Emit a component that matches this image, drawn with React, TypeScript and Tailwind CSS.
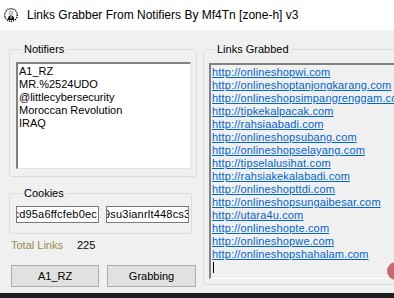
import type { ReactNode } from 'react'

const notifiers = ['A1_RZ', 'MR.%2524UDO', '@littlecybersecurity', 'Moroccan Revolution', 'IRAQ']

const links = [
  'onlineshopwi.com',
  'onlineshoptanjongkarang.com',
  'onlineshopsimpangrenggam.com',
  'tipkekalpacak.com',
  'rahsiaabadi.com',
  'onlineshopsubang.com',
  'onlineshopselayang.com',
  'tipselalusihat.com',
  'rahsiakekalabadi.com',
  'onlineshopttdi.com',
  'onlineshopsungaibesar.com',
  'utara4u.com',
  'onlineshopte.com',
  'onlineshopwe.com',
  'onlineshopshahalam.com',
]

function GroupBox({ title, className, children }: { title: string; className?: string; children: ReactNode }) {
  return (
    <fieldset className={`rounded-[3px] border border-[#dcdcdc] ${className ?? ''}`}>
      <legend className="ml-[6px] px-[2px] leading-[13px] text-black">{title}</legend>
      {children}
    </fieldset>
  )
}

function AppIcon() {
  return (
    <svg width="14" height="14" viewBox="0 0 14 14">
      <circle cx="7" cy="7" r="6.3" fill="none" stroke="#111" strokeWidth="1.4" strokeDasharray="1.2 0.9" />
      <circle cx="7" cy="7" r="4.6" fill="#fff" />
      <ellipse cx="7" cy="5" rx="1.8" ry="2" fill="#e8e0d8" stroke="#555" strokeWidth="0.5" />
      <path d="M3.6 12 Q4 7.6 7 7.6 Q10 7.6 10.4 12 Z" fill="#111" />
      <rect x="6.5" y="8" width="1" height="2.6" fill="#fff" />
    </svg>
  )
}

const btnCls = 'flex h-[22px] items-center justify-center border border-[#adadad] bg-[#e1e1e1] text-black'
const inputCls = 'flex h-[17px] w-[83px] items-center overflow-hidden whitespace-nowrap border border-[#7a7a7a] bg-white tracking-[0.2px]'

export default function App() {
  return (
    <div
      className="relative flex h-[298px] w-[394px] flex-col overflow-hidden bg-[#f0f0f0] text-[11px] text-black"
      style={{ fontFamily: '"Liberation Sans", Arial, sans-serif' }}
    >
      <div className="flex h-[30px] items-center gap-[9px] bg-white pl-[4px] text-[12px]">
        <AppIcon />
        <span>Links Grabber From Notifiers By Mf4Tn [zone-h] v3</span>
      </div>

      <div className="flex flex-1 gap-[6px] pl-[9px] pt-[13px]">
        <div className="flex w-[188px] shrink-0 flex-col">
          <GroupBox title="Notifiers" className="pb-[7px] pl-[6px] pr-[5px]">
            <div className="mt-[6px] h-[107px] border-b border-l-2 border-r border-t-2 border-b-[#e3e3e3] border-l-[#828282] border-r-[#e3e3e3] border-t-[#828282] bg-white pl-[1px] pt-[1px] leading-[13px]">
              {notifiers.map((n) => (
                <div key={n}>{n}</div>
              ))}
            </div>
          </GroupBox>

          <GroupBox title="Cookies" className="mt-[10px] w-[183px] pb-[10px] pl-[6px]">
            <div className="mt-[6px] flex gap-[7px]">
              <div className={`${inputCls} justify-end pr-[1px]`}>5ac3cd95a6ffcfeb0ec</div>
              <div className={inputCls}>
                <span className="-ml-[3px]">9su3ianrlt448cs3hqk</span>
              </div>
            </div>
          </GroupBox>

          <div className="mt-[5px] flex h-[13px] items-center pl-[2px] leading-[13px]">
            <span className="w-[66px] text-[#9b8b4e]">Total Links</span>
            <span>225</span>
          </div>

          <div className="mt-[13px] flex gap-[8px] pl-[2px]">
            <div className={`${btnCls} w-[88px]`}>A1_RZ</div>
            <div className={`${btnCls} w-[89px]`}>Grabbing</div>
          </div>
        </div>

        <GroupBox title="Links Grabbed" className="h-[242px] w-[230px] shrink-0 pl-[5px]">
          <div className="mt-[7px] h-[216px] border-b border-l-2 border-t-2 border-b-white border-l-[#828282] border-t-[#828282] bg-[#f0f0f0] pl-[1px] pt-[1px] leading-[13px] tracking-[0.15px]">
            {links.map((l) => (
              <div key={l}>
                <span className="text-[#0066cc] underline">http://{l}</span>
              </div>
            ))}
            <div className="ml-[1px] mt-[1px] h-[11px] w-[1px] bg-black" />
          </div>
        </GroupBox>
      </div>

      <div className="h-[5px] bg-[#1f1f1f]" />

      <div className="absolute left-[387px] top-[262px] h-[18px] w-[18px] rounded-full bg-[#c46a72]" />
    </div>
  )
}
